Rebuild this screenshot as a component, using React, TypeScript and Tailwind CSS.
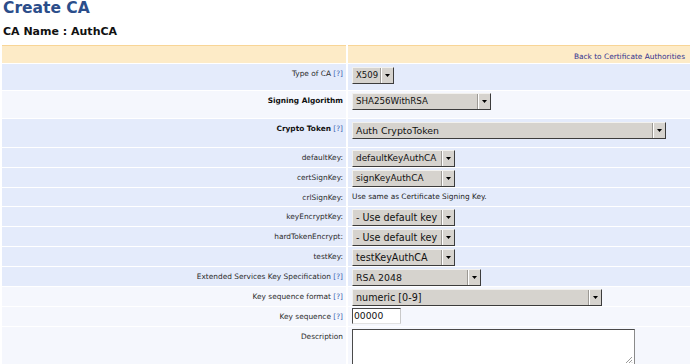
import type { ReactNode } from "react";

type Row = {
  label: ReactNode;
  control: ReactNode;
  height: string;
  tone: "blue" | "light";
  pad?: string;
};

function Help() {
  return <span className="text-[#3a5cb0]"> [?]</span>;
}

function Select({ value, width, text = "text-[9.2px]" }: { value: string; width: string; text?: string }) {
  return (
    <div
      className={`flex h-[17px] ${width} border border-t-[#f2f1ee] border-l-[#f2f1ee] border-r-[#3c3c3c] border-b-[#3c3c3c] bg-[#d6d3ce]`}
    >
      <span className={`flex-1 overflow-hidden whitespace-nowrap pl-[3px] leading-[15px] text-[#111] ${text}`}>{value}</span>
      <span className="flex w-[13px] items-center justify-center border-l border-l-[#9c9994] shadow-[inset_1px_0_0_#ffffff]">
        <svg width="5" height="3" viewBox="0 0 5 3">
          <path d="M0 0h5L2.5 3z" fill="#000" />
        </svg>
      </span>
    </div>
  );
}

export default function App() {
  const rows: Row[] = [
    { label: <>Type of CA<Help /></>, control: <Select value="X509" width="w-[42px]" text="text-[8.5px]" />, height: "h-[26px]", tone: "blue", pad: "pt-[3px]" },
    { label: <b className="text-[#111]">Signing Algorithm</b>, control: <Select value="SHA256WithRSA" width="w-[139px]" text="text-[8.7px]" />, height: "h-[27px]", tone: "light" },
    { label: <><b className="text-[#111]">Crypto Token</b><Help /></>, control: <Select value="Auth CryptoToken" width="w-[314px]" text="text-[9.4px]" />, height: "h-[28px]", tone: "blue", pad: "pt-[3px]" },
    { label: "defaultKey:", control: <Select value="defaultKeyAuthCA" width="w-[103px]" text="text-[8.9px]" />, height: "h-[19px]", tone: "blue" },
    { label: "certSignKey:", control: <Select value="signKeyAuthCA" width="w-[103px]" text="text-[8.9px]" />, height: "h-[19px]", tone: "blue" },
    {
      label: "crlSignKey:",
      control: <span className="text-[7.4px] leading-[17px] text-[#222]">Use same as Certificate Signing Key.</span>,
      height: "h-[18px]",
      tone: "blue",
      pad: "pt-0",
    },
    { label: "keyEncryptKey:", control: <Select value="- Use default key" width="w-[103px]" text="text-[9.6px]" />, height: "h-[19px]", tone: "blue" },
    { label: "hardTokenEncrypt:", control: <Select value="- Use default key" width="w-[103px]" text="text-[9.6px]" />, height: "h-[19px]", tone: "blue" },
    { label: "testKey:", control: <Select value="testKeyAuthCA" width="w-[103px]" text="text-[9.6px]" />, height: "h-[19px]", tone: "blue" },
    { label: <>Extended Services Key Specification<Help /></>, control: <Select value="RSA 2048" width="w-[129px]" text="text-[9.4px]" />, height: "h-[19px]", tone: "blue" },
    { label: <>Key sequence format<Help /></>, control: <Select value="numeric [0-9]" width="w-[250px]" text="text-[9.6px]" />, height: "h-[19px]", tone: "light" },
    {
      label: <>Key sequence<Help /></>,
      control: (
        <div className="h-[16px] w-[49px] border border-t-[#4a4a4a] border-l-[#4a4a4a] border-r-[#c9c9c9] border-b-[#e2e2e2] bg-white pl-[1px] text-[9.2px] leading-[14px] text-[#111]">
          00000
        </div>
      ),
      height: "h-[19px]",
      tone: "light",
      pad: "pt-[1px]",
    },
    {
      label: "Description",
      control: (
        <div className="relative h-[40px] w-[283px] border border-t-[#4a4a4a] border-l-[#4a4a4a] border-r-[#8a8a8a] border-b-[#c9c9c9] bg-white">
          <svg className="absolute bottom-[4px] right-[1px]" width="8" height="8" viewBox="0 0 8 8">
            <path d="M7 1L1 7M7 4L4 7M7 6.5L6.5 7" stroke="#9a9a9a" strokeWidth="1" />
          </svg>
        </div>
      ),
      height: "h-[60px]",
      tone: "light",
    },
  ];

  return (
    <div className="h-[364px] w-[693px] overflow-hidden bg-white font-['DejaVu_Sans',Verdana,sans-serif]">
      <h1 className="h-[16px] pl-[3px] text-[15.5px] font-bold leading-[16px] text-[#2b4d8a]">Create CA</h1>
      <h2 className="mt-[9px] pl-[3px] text-[11px] font-bold leading-[13px] text-[#111]">CA Name : AuthCA</h2>

      <div className="ml-[2px] mt-[7px] flex w-[688px] flex-col gap-px">
        <div className="flex h-[18px] gap-[2px]">
          <div className="w-[344px] border-t border-t-[#f8d596] bg-[#fdebc7]" />
          <div className="flex w-[342px] items-end justify-end border-t border-t-[#f8d596] bg-[#fdebc7] pb-[1px] pr-[5px]">
            <span className="text-[7.4px] leading-[10px] text-[#33338f]">Back to Certificate Authorities</span>
          </div>
        </div>

        {rows.map((row, index) => {
          const bg = row.tone === "blue" ? "bg-[#e4ebfb]" : "bg-[#f5f7fd]";
          return (
            <div key={index} className={`flex gap-[2px] ${row.height}`}>
              <div className={`flex w-[344px] justify-end pr-[3px] ${bg}`}>
                <span className="h-[19px] whitespace-nowrap text-[7.4px] leading-[19px] text-[#2a2a2a]">{row.label}</span>
              </div>
              <div className={`flex w-[342px] items-start pl-[4px] ${row.pad ?? "pt-[2px]"} ${bg}`}>{row.control}</div>
            </div>
          );
        })}
      </div>
    </div>
  );
}
